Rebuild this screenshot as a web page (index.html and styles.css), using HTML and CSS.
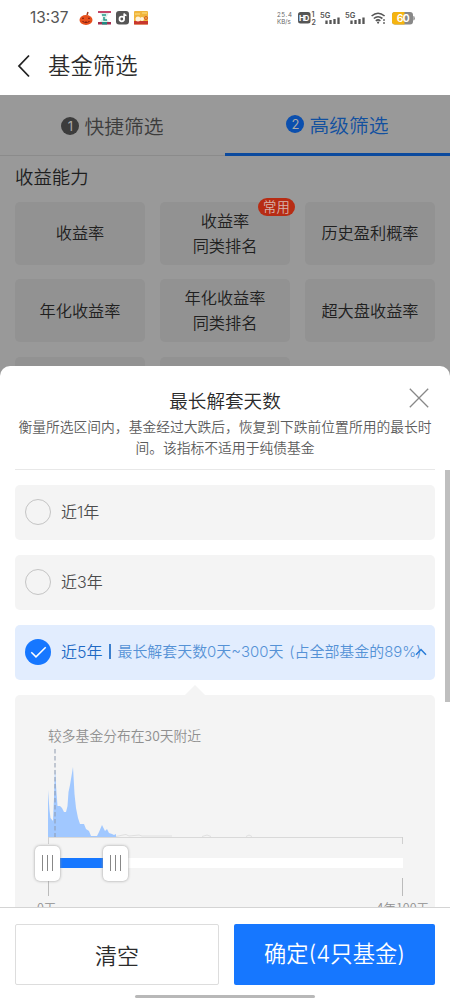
FILE: index.html
```html
<!DOCTYPE html>
<html lang="zh-CN">
<head>
<meta charset="utf-8">
<title>基金筛选</title>
<link rel="stylesheet" href="styles.css">
</head>
<body>
<div class="phone">
  <header class="status">
    <span class="clock">13:37</span>
    <div class="apps">
      <svg width="14" height="15" viewBox="0 0 14 15"><path d="M8 4L9 1" stroke="#a03a1c" stroke-width="1.5"/><ellipse cx="7" cy="9" rx="6.5" ry="5" fill="#e8501c"/><path d="M3 8l1-2 1 2zM9 8l1-2 1 2zM2.500 10q4.500 4 9 0l-2 .3-1 1-1.500-1-1.500 1-1-1z" fill="#7c1b10"/></svg>
      <svg width="13" height="14" viewBox="0 0 13 14"><path d="M0 0h13v2H0z" fill="#c4476a"/><path d="M2 2h9L8 7l3 4H2l3-4z" fill="#d9efeb"/><path d="M4 4h4M6 6v3h3" stroke="#2a9a8b" stroke-width="1.500" fill="none"/><path d="M0 11h13v2.500H0z" fill="#a32e50"/><path d="M4 11h5v2.500H4z" fill="#208a82"/></svg>
      <svg width="13" height="14" viewBox="0 0 13 14"><rect width="13" height="13.500" rx="3" fill="#555"/><circle cx="5.800" cy="8" r="2.300" fill="none" stroke="#fff" stroke-width="1.700"/><path d="M8.100 8V2.500q.5 2 2.400 2" fill="none" stroke="#fff" stroke-width="1.500"/></svg>
      <svg width="14" height="14" viewBox="0 0 14 14"><rect width="14" height="13.500" rx="1" fill="#f0b53c"/><path d="M0 10h14v3.500H0z" fill="#c8372d"/><path d="M1 3h5M8 2h5" stroke="#fbe28a"/><circle cx="4" cy="8" r="2.500" fill="#fff3dc"/><circle cx="8" cy="8" r="2" fill="#fff3dc"/><circle cx="12" cy="7" r="1.500" fill="none" stroke="#d4592d"/></svg>
    </div>
    <div class="signals">
      <div class="rate"><span class="amount">25.4</span><span>KB/s</span></div>
      <svg class="hd" width="18" height="14" viewBox="0 0 18 14"><rect y="1" width="12.500" height="11.500" rx="2.500" fill="#555"/><text x="1" y="9.700" font-size="7.800" font-weight="700" fill="#fff" textLength="10.500">HD</text><text x="13.500" y="6" font-size="7" font-weight="600" fill="#555">1</text><text x="13.500" y="13.500" font-size="7" font-weight="600" fill="#555">2</text></svg>
      <svg class="cell5g" width="21" height="14" viewBox="0 0 21 14"><text x="0" y="6.500" font-size="7.500" font-weight="600" fill="#555">5G</text><path d="M6.500 9.500V13M10.500 9V13M14.500 8v5M18.500 6.500V13" stroke="#555" stroke-width="2.300"/></svg>
      <svg class="cell5g second" width="21" height="14" viewBox="0 0 21 14"><text x="0" y="6.500" font-size="7.500" font-weight="600" fill="#555">5G</text><path d="M6.500 9.500V13M10.500 9V13M14.500 8v5M18.500 6.500V13" stroke="#555" stroke-width="2.300"/></svg>
      <svg class="wifi" width="15" height="12" viewBox="0 0 15 12"><g fill="none" stroke="#555" stroke-width="1.600"><path d="M.6 4Q7 -1.500 13.600 4M2.800 6.500Q7 3 11.400 6.500M4.800 8.800Q7 7 9.400 8.800"/></g><circle cx="7.100" cy="10.600" r="1.100" fill="#555"/><path d="M13 7v2M13 10v2" stroke="#555" stroke-width="1.300"/></svg>
      <svg class="battery" width="23" height="13" viewBox="0 0 23 13"><rect width="21" height="12.500" rx="3" fill="#888"/><path d="M3 0h9.500v12.500H3a3 3 0 0 1-3-3V3a3 3 0 0 1 3-3z" fill="#f5b40f"/><path d="M21.300 4q1.500 0 1.500 2.200t-1.500 2.200z" fill="#888"/><text x="4.700" y="10.200" font-size="10.500" font-weight="600" fill="#fff" textLength="13">60</text></svg>
    </div>
  </header>
  <nav class="titlebar">
    <svg width="14" height="24" viewBox="0 0 14 24"><path d="M12 1.500L2 12l10 10.500" fill="none" stroke="#222" stroke-width="1.800"/></svg>
    <h1>基金筛选</h1>
  </nav>

  <main class="filters">
    <div class="tabs">
      <div class="tab"><span class="num">1</span>快捷筛选</div>
      <div class="tab active"><span class="num">2</span>高级筛选</div>
    </div>
    <h2>收益能力</h2>
    <div class="grid">
      <div class="option">收益率</div>
      <div class="option">收益率<br>同类排名<span class="badge">常用</span></div>
      <div class="option">历史盈利概率</div>
      <div class="option">年化收益率</div>
      <div class="option">年化收益率<br>同类排名</div>
      <div class="option">超大盘收益率</div>
      <div class="option"></div>
      <div class="option"></div>
    </div>
  </main>

  <section class="sheet">
    <div class="sheet-head">
      <h3>最长解套天数</h3>
      <p>衡量所选区间内，基金经过大跌后，恢复到下跌前位置所用的最长时<br>间。该指标不适用于纯债基金</p>
      <svg class="close" width="20" height="20" viewBox="0 0 20 20"><path d="M.8.800l18.400 18.400M19.200.800L.8 19.200" stroke="#888" stroke-width="1.300"/></svg>
    </div>
    <div class="periods">
      <div class="period"><i class="radio"></i><span class="year">近1年</span></div>
      <div class="period"><i class="radio"></i><span class="year">近3年</span></div>
      <div class="period selected">
        <svg class="check" width="26" height="26" viewBox="0 0 26 26"><circle cx="13" cy="13" r="13" fill="#1677ff"/><path d="M6.300 13.200l4.700 4.700 9.700-9.700" fill="none" stroke="#fff" stroke-width="1.500"/></svg>
        <span class="year">近5年</span><i class="bar"></i><span class="range">最长解套天数0天~300天</span><span class="share">(占全部基金的89%)</span>
        <svg class="caret" width="12" height="8" viewBox="0 0 12 8"><path d="M1 6.800L6 1.500l5 5.300" fill="none" stroke="#267ad8" stroke-width="1.500"/></svg>
      </div>
      <div class="panel">
        <p>较多基金分布在30天附近</p>
        <svg class="chart" width="356" height="96" viewBox="0 0 356 96">
          <path d="M0 89V42L1.500 62 2.500 70 5 73 6 50 7 20 8.500 45 9.500 58H12L14 60 16 64H18L19.500 58 20.500 44 22 37 23 31 25 19 26.500 46 28 60 30 70 32 76H36L38 81 41 83 43 88H49L51 84 54 77 57 83 59 81 61 85 64 86 66 87 68 86V89Z" fill="#a1c8ff"/>
          <path d="M68 88.500l7-1.500 3-.5 3 1.500 10-1 3 1h30M154 88.500l5-1.500 4 1.500M198 88.500l3-1.500 3 1.500" fill="none" stroke="#e0e0e0"/>
          <path d="M0 89.500h354.500" stroke="#d9d9d9"/><path d="M.5 89v7M354.500 89v7" stroke="#d0d0d0"/>
          <path d="M7 1v88" stroke="#8d9aaf" stroke-opacity=".65" stroke-width="1.500" stroke-dasharray="4.500 2.500"/>
        </svg>
        <div class="slider">
          <div class="handle"><i></i><i></i><i></i></div><div class="fill"></div><div class="handle"><i></i><i></i><i></i></div><div class="rest"></div>
        </div>
        <div class="ticks"><i></i><i></i></div>
        <div class="limits"><span>0天</span><span>4年100天</span></div>
      </div>
      <div class="scrollbar"></div>
    </div>
    <footer>
      <div class="actions"><button class="clear">清空</button><button class="confirm">确定(4只基金)</button></div>
      <div class="home"></div>
    </footer>
  </section>
</div>
</body>
</html>
```
FILE: styles.css
```css
* { box-sizing: border-box; }
body, h1, h2, h3, p { margin: 0; font-weight: 350; }
body { font-family: "Noto Sans CJK SC", sans-serif; font-weight: 350; color: #333; }
svg { display: block; flex: none; overflow: visible; }
svg text { font-family: Inter, sans-serif; }
.phone { width: 450px; height: 1000px; display: flex; flex-direction: column; overflow: hidden; background: #fff; }

.status { height: 36px; flex: none; display: flex; align-items: center; padding: 0 35px 0 30px; color: #555; }
.clock { font: 15.4px/20px Inter, sans-serif; width: 49px; }
.apps { display: flex; gap: 5px; align-items: center; }
.signals { margin-left: auto; display: flex; align-items: center; }
.rate { display: flex; flex-direction: column; font: 6.2px/7px Inter, sans-serif; width: 21px; color: #666; }
.amount { letter-spacing: .6px; }
.hd { margin-right: 4px; }
.cell5g { margin-right: 4px; }
.second { margin-right: 5px; }
.wifi { margin-right: 6px; }

.titlebar { height: 59px; flex: none; display: flex; align-items: center; gap: 17px; padding-left: 17px; }
.titlebar h1 { font-size: 22.4px; line-height: 32px; padding-bottom: 3px; color: #2b2b2b; }

.filters { height: 281px; flex: none; overflow: hidden; background: #999; }
.tabs { display: flex; height: 61px; border-bottom: 1px solid #8b8b8b; }
.tab { width: 225px; height: 61px; display: flex; align-items: center; justify-content: center; gap: 5px; font-size: 19.8px; color: #3c3c3c; }
.active { color: #12509f; border-bottom: 3px solid #0b4a9e; }
.num { width: 18px; height: 18px; border-radius: 50%; background: #3c3c3c; color: #aaa; font: 13px/18px Inter, sans-serif; text-align: center; }
.active .num { background: #0b4fae; }
.filters h2 { padding: 6px 0 1px 15px; font-size: 18.4px; line-height: 28px; color: #1e1e1e; }
.grid { display: grid; grid-template-columns: repeat(3, 130px); grid-auto-rows: 63px; gap: 14.5px 15px; padding: 10.5px 15px 0; }
.option { position: relative; display: flex; align-items: center; justify-content: center; text-align: center; background: #929292; border-radius: 5px; padding-bottom: 1px; font-size: 16.2px; line-height: 25px; color: #202020; }
.badge { position: absolute; top: -4px; right: -5px; width: 37px; height: 18px; border-radius: 9px; background: #b72c14; color: #d8b4ac; font-size: 13.4px; line-height: 16px; }

.sheet { flex: 1; min-height: 0; margin-top: -10px; background: #fff; display: flex; flex-direction: column; position: relative; border-radius: 10px 10px 0 0; }
.sheet-head { position: relative; height: 104px; flex: none; margin: 0 15px; padding-top: 20px; border-bottom: 1px solid #e8e8e8; text-align: center; }
.sheet-head h3 { font-size: 18.6px; line-height: 28px; color: #2b2b2b; }
.sheet-head p { font-size: 13.78px; line-height: 21px; color: #5c5c5c; white-space: nowrap; padding-top: 2px; }
.close { position: absolute; right: 6px; top: 22px; }

.periods { position: relative; flex: 1; min-height: 0; overflow: hidden; padding: 15px 15px 0; display: flex; flex-direction: column; gap: 15px; }
.period { height: 55px; flex: none; border-radius: 5px; background: #f4f4f4; display: flex; align-items: center; padding: 0 0 2px 10px; font-size: 16px; color: #4c4c4c; white-space: nowrap; }
.radio { width: 26px; height: 26px; border: 1px solid #c4c4c4; border-radius: 50%; margin-right: 10px; }
.selected { background: #e2edfe; color: #2069c4; }
.check { margin-right: 10px; }
.bar { width: 1.5px; height: 15px; background: #3b7fce; margin: 0 7px 0 6.5px; }
.year, .range, .share, .confirm { font-family: Inter, "Noto Sans CJK SC", sans-serif; }
.year { font-size: 16px; line-height: 24px; }
.range, .share { font-size: 14.95px; line-height: 24px; color: #5592d6; }
.share { margin-left: 6px; }
.caret { margin-left: -6px; }
.panel { position: relative; height: 260px; flex: none; border-radius: 5px; background: #f4f4f4; padding: 29px 32px 0 33px; }
.panel::before { content: ""; position: absolute; left: 170px; top: -10px; border: 10px solid transparent; border-top: 0; border-bottom-color: #f4f4f4; }
.panel p { font-size: 13.8px; line-height: 22px; color: #909090; }
.chart { margin-top: 2px; }
.slider { display: flex; align-items: center; height: 36px; margin: 1px 0 0 -13px; }
.handle { width: 25px; height: 35px; border-radius: 5px; background: #fff; box-shadow: 0 0 3px #999; display: flex; gap: 3.5px; align-items: center; justify-content: center; flex: none; z-index: 1; }
.handle i { width: 1.5px; height: 16px; background: #888; }
.fill { width: 43px; height: 10px; background: #1677ff; }
.rest { flex: 1; height: 10px; background: #fff; }
.ticks { display: flex; justify-content: space-between; margin-top: -3px; height: 18px; }
.ticks i { width: 1px; background: #bbb; }
.limits { display: flex; justify-content: space-between; margin: 2px -26px 0 -11px; font-size: 12.5px; line-height: 20px; color: #909090; }
.scrollbar { position: absolute; right: 0; top: 0; width: 5px; height: 232px; background: #bfbfbf; }

footer { height: 93px; flex: none; border-top: 1px solid #d4d4d4; background: #fff; padding-top: 16px; }
.actions { display: flex; gap: 15px; padding: 0 15px; }
button { height: 61px; margin: 0; padding: 0 0 1px; font-family: inherit; font-weight: 350; font-size: 22px; line-height: 30px; border-radius: 2px; }
.clear { width: 204px; background: #fff; border: 1px solid #ddd; color: #2b2b2b; }
.confirm { width: 201px; border: 0; background: #1677ff; color: #fff; font-size: 22.3px; font-family: Inter, "Noto Sans CJK SC", sans-serif; }
.home { width: 180px; height: 3px; border-radius: 2px; background: #b8b8b8; margin: 10px auto 0; }
```
